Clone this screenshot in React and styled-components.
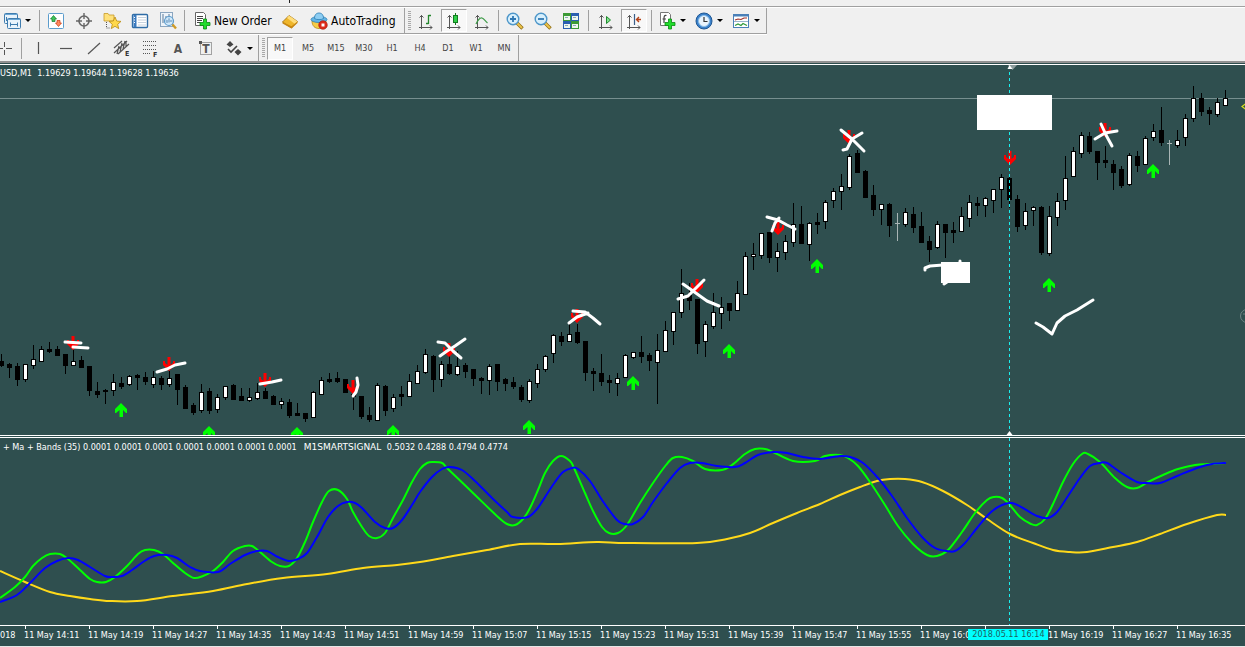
import React from "react";
import styled, { createGlobalStyle, css } from "styled-components";

const GlobalStyle = createGlobalStyle`
  html, body {
    margin: 0;
    background: #f0f0f0;
  }
  body {
    font-family: "DejaVu Sans Condensed", "DejaVu Sans", sans-serif;
    font-size: 9px;
    overflow-x: hidden;
  }
`;

const Page = styled.main`
  display: flex;
  flex-direction: column;
  background: #f0f0f0;
`;

const MenuStrip = styled.div`
  display: flex;
  height: 6px;
  border-bottom: 1px solid #a0a0a0;
  box-shadow: 0 1px 0 #fff;
`;

const MenuMark = styled.span`
  width: 1px;
  height: 3px;
  margin-left: 289px;
  background: #222;
`;

const ToolRow = styled.div`
  display: flex;
  align-items: stretch;
  height: 26px;
  padding-top: 1px;
`;

const Toolbar = styled.div`
  display: flex;
  align-items: center;
  border-right: 1px solid #a0a0a0;
  ${({ $line }) =>
    $line &&
    css`
      border-bottom: 1px solid #a0a0a0;
      box-shadow: 0 1px 0 #fff;
    `}
`;

const Grip = styled.span`
  width: 3px;
  height: 20px;
  margin: 0 1px 0 3px;
  background: repeating-linear-gradient(#a8a8a8 0 1px, #f0f0f0 1px 2px);
`;

const Sep = styled.span`
  width: 1px;
  height: 21px;
  margin: 0 ${({ $gap }) => $gap || 2}px;
  background: #a0a0a0;
`;

const Button = styled.button`
  display: flex;
  align-items: center;
  justify-content: ${({ $start }) => ($start ? "flex-start" : "center")};
  gap: 3px;
  box-sizing: border-box;
  flex: none;
  width: ${({ $w }) => $w || 28}px;
  height: 23px;
  padding: ${({ $start }) => ($start ? "0 0 0 5px" : "0")};
  border: 1px solid transparent;
  background: none;
  color: #444;
  font: inherit;
  white-space: nowrap;
  ${({ $pressed }) =>
    $pressed &&
    css`
      width: 26px;
      margin: 0 1px;
      border-color: #a0a0a0 #fff #fff #a0a0a0;
      background: #f8f8f8;
    `}
`;

const TextButton = styled(Button)`
  color: #000;
  font-size: 12px;
  line-height: 16px;
`;

const DropButton = styled.button`
  display: flex;
  align-items: center;
  width: ${({ $w }) => $w || 13}px;
  height: 23px;
  padding: 0;
  border: 0;
  background: none;

  &::before {
    content: "";
    margin-left: 1px;
    border: 3px solid transparent;
    border-top-color: #000;
    border-bottom-width: 0;
  }
`;

const Glyph = styled.svg`
  flex: none;
  display: block;
  overflow: visible;
`;

const Workspace = styled.section`
  display: flex;
  flex-direction: column;
  border-top: 2px solid #909090;
  background: #2f4f4f;
  color: #fff;
`;

const Pane = styled.div`
  position: relative;
  overflow: hidden;
  margin-top: 1px;
  border-top: 1px solid #fff;
  border-bottom: ${({ $split }) => ($split ? "1px solid #fff" : "0")};
`;

const PaneLabel = styled.div`
  position: absolute;
  top: ${({ $top }) => $top}px;
  left: ${({ $left }) => $left}px;
  line-height: 12px;
  white-space: pre;
`;

const SignalName = styled.span`
  margin: 0 3px 0 2px;
  font-family: "DejaVu Sans", sans-serif;
`;

const Plot = styled.svg`
  display: block;
  width: 100%;
  height: auto;
`;

const TimeAxis = styled.div`
  position: relative;
  display: grid;
  grid-template-columns: 24fr repeat(19, 64fr) 5fr;
  height: 20px;
  overflow: hidden;
  border-top: 1px solid #fff;
  border-bottom: 1px solid #e6e6e6;
`;

const AxisCell = styled.time`
  display: flex;
  flex-direction: column;
  min-width: 0;
  line-height: 12px;
  white-space: nowrap;

  &::before {
    content: "";
    width: 1px;
    height: 3px;
    margin-left: 1px;
    background: ${({ $plain }) => ($plain ? "transparent" : "#fff")};
  }
`;

const Cursor = styled.time`
  position: absolute;
  top: 3px;
  left: 81%;
  width: 80px;
  transform: translateX(-50%);
  background: #00ffff;
  color: #1f5f5f;
  line-height: 11px;
  text-align: center;
  white-space: nowrap;
`;

const Icon = ({ w = 18, children }) => (
  <Glyph width={w} height='18' viewBox={`0 0 ${w} 18`} fill='none' aria-hidden='true'>
    {children}
  </Glyph>
);

const WindowsIcon = () => (
  <Icon>
    <rect x='1.5' y='1.5' width='13' height='10' rx='1' fill='#e8f3fb' stroke='#3f7cae' />
    <path d='M2 2.500h12' stroke='#6aa6d4' />
    <rect x='4.5' y='6.5' width='13' height='10' rx='1' fill='#e8f3fb' stroke='#3f7cae' />
    <path d='M5 7.500h12' stroke='#6aa6d4' />
    <path d='M3.500 5v4M7 12.500h8M7.500 10.500v4M14.500 10.500v4' stroke='#3f7cae' />
  </Icon>
);

const MarketIcon = () => (
  <Icon>
    <rect x='1.500' y='1.500' width='15' height='15' rx='1' fill='#fff' stroke='#5b9ccc' />
    <path d='M6.500 3.500L9.500 7H8v2.500H5V7H3.500z' fill='#3fc45a' stroke='#147a2c' strokeWidth='.700' />
    <path d='M11.500 14.500l3-3.500H13V8.500h-3V11H8.500z' fill='#ff8a60' stroke='#c8380d' strokeWidth='.700' />
  </Icon>
);

const TargetIcon = () => (
  <Icon>
    <circle cx='9' cy='9' r='5' stroke='#666' strokeWidth='1.600' />
    <path d='M9 1v6M9 11v6M1 9h6M11 9h6' stroke='#666' strokeWidth='1.400' />
  </Icon>
);

const Star = ({ x = 0, y = 0 }) => (
  <path
    transform={`translate(${x} ${y})`}
    d='M6 0l1.700 4 4.300.400-3.300 2.900 1 4.300L6 9.300l-3.700 2.300 1-4.300L0 4.400 4.300 4z'
    fill='#ffd84a'
    stroke='#b98a10'
    strokeWidth='.800'
  />
);

const NavigatorIcon = () => (
  <Icon>
    <path d='M1 1.500h4l1 1.500h5v6H1z' fill='#ffe17a' stroke='#c79a28' strokeWidth='.800' />
    <path d='M3.500 10v6h4' stroke='#555' strokeDasharray='1 1' />
    <Star x={6} y={5} />
  </Icon>
);

const TerminalIcon = () => (
  <Icon>
    <rect x='1.500' y='2.500' width='15' height='13' rx='1' fill='#fff' stroke='#2f6ca6' strokeWidth='1.400' />
    <path d='M4 3v12' stroke='#3a7abf' strokeWidth='3' />
    <path d='M7 5.500h8M7 8h8M7 10.500h8M7 13h8' stroke='#b9c7d6' strokeWidth='.800' />
    <path d='M3 5.500h1M3 8h1M3 10.500h1' stroke='#fff' />
  </Icon>
);

const TesterIcon = () => (
  <Icon>
    <rect x='1.500' y='.500' width='12' height='14' fill='#eef4fa' stroke='#8ba6c0' />
    <path d='M4 2v9M7 4v6M10 2v5' stroke='#5a7a99' />
    <circle cx='10' cy='9' r='4.500' fill='#cbe6fa' fillOpacity='.85' stroke='#5d9ccc' strokeWidth='1.200' />
    <path d='M8 8v3M10 6.500v4M12 8v2' stroke='#5a8ab5' />
    <path d='M13.500 12.500l3.500 4' stroke='#cf9b27' strokeWidth='2.400' />
  </Icon>
);

const Plus = ({ x, y }) => (
  <path
    transform={`translate(${x} ${y})`}
    d='M3.500 0h3v3.500H10v3H6.500V10h-3V6.500H0v-3h3.500z'
    fill='#21dc2b'
    stroke='#078a10'
    strokeWidth='.800'
  />
);

const OrderIcon = () => (
  <Icon>
    <path d='M2.500.500h8l2 2v11h-10z' fill='#fff' stroke='#666' />
    <path d='M4 4.500h6M4 6.500h6M4 8.500h5M4 10.500h3' stroke='#444' />
    <Plus x={7} y={7} />
  </Icon>
);

const EditorIcon = () => (
  <Icon>
    <path d='M1.500 10L8 3.500l8.500 6-6 6.500z' fill='#efb62b' stroke='#9b6b0c' strokeWidth='.800' />
    <path d='M8 3.500l8.500 6-2.500 2.500-8-6z' fill='#ffdd7a' />
    <path d='M1.500 10l9 4.200L16.500 9.500V11l-6 5.500-9-5z' fill='#c98813' />
  </Icon>
);

const ExpertIcon = () => (
  <Icon>
    <path d='M2 9c0 5 3 7.500 7 7.500s7-2.500 7-7.500z' fill='#f6cc46' stroke='#b88a16' strokeWidth='.800' />
    <ellipse cx='9' cy='7.500' rx='8' ry='3' fill='#62b5e6' stroke='#2c7db2' strokeWidth='.800' />
    <path d='M4.500 6.500C4.500 2.500 6.500 1 9 1s4.500 1.500 4.500 5.500c-2 1.500-7 1.500-9 0z' fill='#8dcdf2' stroke='#2c7db2' strokeWidth='.800' />
    <circle cx='13' cy='13' r='4.300' fill='#dc2a1a' stroke='#a3140a' strokeWidth='.600' />
    <rect x='11.500' y='11.500' width='3' height='3' fill='#fff' />
  </Icon>
);

const Axes = () => (
  <path
    d='M4.500 3v14M2 15.500h13M2.500 5.500l2-2 2 2M13 13.500l2 2-2 2'
    stroke='#555'
  />
);

const BarsIcon = () => (
  <Icon>
    <Axes />
    <path d='M11.500 3v9M11.500 3.500H14M9 11.500h2.500' stroke='#23852c' strokeWidth='1.300' />
  </Icon>
);

const CandlesIcon = () => (
  <Icon>
    <Axes />
    <path d='M10.500 1v12' stroke='#157a20' />
    <rect x='8.500' y='3.500' width='4' height='7' fill='#2fd048' stroke='#157a20' />
  </Icon>
);

const LineIcon = () => (
  <Icon>
    <Axes />
    <path d='M3 12c2-4 4-6.500 6-6 2 .500 3 3 5.500 5' stroke='#3c9a46' strokeWidth='1.200' />
  </Icon>
);

const ZoomIcon = ({ plus }) => (
  <Icon>
    <path d='M11 11l5.500 5.500' stroke='#8f6c14' strokeWidth='3.400' />
    <path d='M11 11l5 5' stroke='#ecc54a' strokeWidth='2' />
    <circle cx='7' cy='7' r='5.800' fill='#d7effc' stroke='#4d96c9' strokeWidth='1.400' />
    <path d={plus ? "M4 7h6M7 4v6" : "M4 7h6"} stroke='#2f78b4' strokeWidth='1.800' />
  </Icon>
);

const TilesIcon = () => (
  <Icon>
    <rect x='1' y='1' width='8' height='8' fill='#3b9a35' />
    <rect x='9' y='1' width='8' height='8' fill='#2a5fb0' />
    <rect x='1' y='9' width='8' height='8' fill='#2a5fb0' />
    <rect x='9' y='9' width='8' height='8' fill='#3b9a35' />
    <path d='M2 4h6v4H2zM10 4h6v4h-6zM2 12h6v4H2zM10 12h6v4h-6z' fill='#eef7ee' />
    <path d='M3 5.500h3M11 5.500h3M3 13.500h3M11 13.500h3' stroke='#8aa8b8' />
  </Icon>
);

const ScrollIcon = () => (
  <Icon>
    <Axes />
    <path d='M9.500 4.500l4 3.500-4 3.500z' fill='#7fe08a' stroke='#1e8a2c' />
  </Icon>
);

const ShiftIcon = () => (
  <Icon>
    <Axes />
    <path d='M9.500 2v11' stroke='#3a5f8a' strokeWidth='1.200' />
    <path d='M16 7.500h-4M14 5L11.500 7.500 14 10' stroke='#b5431a' strokeWidth='1.400' />
  </Icon>
);

const IndicatorIcon = () => (
  <Icon>
    <path d='M2.500.500h8l2 2v11h-10z' fill='#fff' stroke='#777' />
    <path d='M8.500 3.500C6 3 6 5 6 7v4M4.500 7H8' stroke='#444' strokeWidth='1.200' />
    <Plus x={7} y={7} />
  </Icon>
);

const ClockIcon = () => (
  <Icon>
    <circle cx='9' cy='9' r='8' fill='#3b82cc' stroke='#1f5793' />
    <circle cx='9' cy='9' r='5.500' fill='#e9f4fd' stroke='#8fc0e8' />
    <path d='M9 5v4.500h3.500' stroke='#333' strokeWidth='1.200' />
  </Icon>
);

const TemplateIcon = () => (
  <Icon>
    <rect x='1.500' y='2.500' width='15' height='13' fill='#fff' stroke='#4a80b8' />
    <path d='M2 3.500h14' stroke='#4a80b8' strokeWidth='2' />
    <path d='M3 8l3-1 3 .500 3-1.500h3' stroke='#a03028' strokeWidth='1.200' />
    <path d='M2 9.500h14' stroke='#9ab4cc' />
    <path d='M3 13.500l3-1.500 3 1.500 2-2 4 2' stroke='#2f9a3a' strokeWidth='1.200' />
  </Icon>
);

const CrossIcon = () => (
  <Icon w={19}>
    <path d='M4.500 3v5M4.500 11v5M-1 9.500h4M6 9.500h6' stroke='#555' />
  </Icon>
);

const StrokeIcon = ({ d }) => (
  <Icon>
    <path d={d} stroke='#555' strokeWidth='1.200' />
  </Icon>
);

const ChannelIcon = () => (
  <Icon>
    <path d='M1 14L14 2M1 9l8-7M5 15L16 5M4 15l2-8M7 13l2-9M10 10l2-8M13 8V2' stroke='#555' strokeWidth='1.200' />
    <text x='12' y='17' fontSize='7' fontWeight='bold' fill='#333'>E</text>
  </Icon>
);

const FiboIcon = () => (
  <Icon>
    <path d='M2 2.500h14M2 6.500h14M2 10.500h14M2 14.500h8' stroke='#555' strokeDasharray='1 1' />
    <text x='12' y='18' fontSize='7' fontWeight='bold' fill='#333'>F</text>
  </Icon>
);

const LetterIcon = ({ boxed, children }) => (
  <Icon>
    {boxed && <rect x='3.500' y='3.500' width='11' height='12' stroke='#555' strokeDasharray='1 1' />}
    {boxed && <path d='M2 2h3v3H2z' fill='#555' />}
    <text x='9' y='14' textAnchor='middle' fontSize='12' fontWeight='bold' fill='#555'>
      {children}
    </text>
  </Icon>
);

const ShapesIcon = () => (
  <Icon>
    <path d='M6 2l3.500 3.500L6 8 2.500 5.500zM14 10l3.500 3L14 16.500 10.500 13z' fill='#444' />
    <path d='M4 10l3 3 6-6' stroke='#444' strokeWidth='1.600' />
  </Icon>
);

const frames = ["M1", "M5", "M15", "M30", "H1", "H4", "D1", "W1", "MN"];

const times = [
  "14:11", "14:19", "14:27", "14:35", "14:43", "14:51", "14:59",
  "15:07", "15:15", "15:23", "15:31", "15:39", "15:47", "15:55",
  "16:06", "", "16:19", "16:27", "16:35"
].map(t => (t ? `11 May ${t}` : ""));

// high, body top, body bottom, low, up (1), down (0) or flat (2)
const candles = [
  [354, 361, 365, 366, 0], [363, 364, 367, 377, 0], [363, 366, 379, 385, 0], [364, 364, 379, 381, 1],
  [345, 359, 365, 368, 1], [346, 349, 361, 361, 1], [342, 349, 351, 352, 0], [346, 349, 355, 355, 0],
  [354, 354, 365, 373, 0], [350, 361, 365, 365, 1], [356, 360, 367, 367, 0], [366, 366, 390, 395, 0],
  [382, 391, 394, 397, 0], [389, 390, 391, 403, 0], [374, 382, 390, 395, 1], [377, 383, 386, 388, 0],
  [375, 376, 384, 385, 1], [374, 375, 377, 389, 0], [372, 377, 381, 384, 0], [371, 377, 384, 387, 1],
  [376, 378, 384, 389, 0], [371, 378, 384, 386, 1], [374, 374, 389, 404, 0], [385, 387, 408, 408, 0],
  [403, 405, 412, 414, 0], [384, 392, 410, 412, 1], [388, 391, 410, 413, 0], [394, 397, 409, 412, 1],
  [386, 386, 397, 399, 1], [384, 385, 399, 399, 0], [388, 396, 400, 400, 0], [388, 397, 400, 401, 1],
  [383, 392, 398, 399, 1], [388, 391, 398, 398, 0], [395, 396, 404, 404, 0], [398, 401, 404, 408, 1],
  [399, 402, 415, 417, 0], [403, 413, 415, 415, 0], [413, 413, 418, 421, 0], [391, 392, 417, 417, 1],
  [377, 380, 394, 394, 1], [373, 379, 381, 382, 0], [372, 378, 381, 382, 0], [379, 379, 392, 392, 0],
  [390, 394, 396, 409, 0], [396, 396, 416, 418, 0], [407, 415, 419, 421, 0], [383, 385, 420, 420, 1],
  [385, 386, 410, 415, 0], [394, 397, 408, 411, 1], [386, 394, 396, 405, 0], [374, 381, 396, 396, 1],
  [365, 371, 383, 383, 1], [349, 354, 372, 373, 1], [355, 356, 379, 391, 0], [361, 364, 379, 386, 1],
  [355, 364, 373, 374, 0], [351, 366, 374, 375, 1], [363, 365, 371, 377, 0], [369, 369, 378, 385, 0],
  [377, 378, 380, 393, 0], [364, 366, 380, 394, 1], [364, 364, 381, 390, 0], [378, 379, 383, 390, 0],
  [377, 382, 386, 388, 0], [385, 387, 399, 401, 0], [379, 381, 400, 402, 1], [364, 369, 383, 387, 1],
  [355, 356, 369, 371, 1], [334, 335, 353, 362, 1], [332, 336, 341, 345, 0], [323, 334, 341, 341, 1],
  [324, 332, 342, 343, 0], [341, 341, 372, 380, 0], [368, 371, 373, 390, 0], [354, 373, 381, 385, 0],
  [375, 380, 382, 392, 0], [373, 378, 383, 395, 1], [354, 355, 377, 377, 1], [352, 352, 357, 358, 1],
  [336, 352, 356, 362, 0], [353, 355, 360, 370, 0], [334, 350, 362, 403, 1], [321, 330, 351, 351, 1],
  [312, 312, 331, 344, 1], [269, 293, 312, 317, 1], [283, 295, 300, 309, 0], [299, 299, 343, 353, 0],
  [321, 324, 341, 356, 1], [293, 312, 326, 328, 1], [297, 307, 313, 328, 1], [303, 303, 310, 320, 0],
  [281, 293, 310, 310, 1], [252, 256, 294, 294, 1], [243, 254, 256, 269, 1], [233, 233, 255, 258, 1],
  [232, 232, 257, 262, 0], [243, 251, 257, 271, 1], [235, 241, 252, 259, 1], [203, 224, 242, 246, 1],
  [206, 224, 243, 243, 0], [222, 223, 244, 260, 1], [213, 222, 224, 233, 0], [200, 202, 221, 228, 1],
  [188, 191, 200, 207, 1], [174, 186, 191, 209, 1], [154, 156, 187, 189, 1], [150, 153, 172, 172, 0],
  [170, 171, 197, 197, 0], [185, 195, 209, 215, 0], [204, 204, 209, 224, 1], [203, 204, 225, 236, 0],
  [213, 223, 223, 241, 2], [208, 212, 224, 226, 1], [207, 214, 227, 232, 0], [212, 226, 242, 242, 0],
  [236, 241, 249, 261, 0], [221, 224, 247, 248, 1], [224, 224, 232, 257, 0], [222, 230, 232, 242, 0],
  [207, 216, 231, 231, 1], [195, 202, 218, 226, 1], [197, 203, 205, 215, 0], [197, 198, 205, 216, 1],
  [189, 189, 200, 212, 1], [174, 177, 189, 207, 1], [175, 178, 199, 207, 0], [195, 199, 226, 231, 0],
  [203, 211, 225, 229, 1], [206, 207, 210, 225, 1], [206, 207, 252, 254, 0], [206, 216, 253, 255, 1],
  [193, 201, 217, 225, 1], [156, 178, 200, 209, 1], [147, 151, 176, 176, 1], [132, 135, 153, 157, 1],
  [132, 136, 151, 153, 0], [151, 151, 162, 179, 0], [146, 160, 162, 167, 0], [160, 164, 172, 189, 0],
  [166, 169, 185, 187, 0], [153, 155, 184, 185, 1], [151, 156, 165, 171, 0], [136, 138, 164, 164, 1],
  [124, 131, 137, 140, 1], [107, 130, 142, 145, 0], [140, 143, 143, 165, 2], [130, 140, 145, 147, 1],
  [114, 118, 137, 145, 1], [86, 98, 118, 121, 1], [93, 98, 111, 115, 0], [107, 110, 113, 124, 0],
  [98, 102, 114, 116, 1], [90, 98, 105, 105, 1]
];

const Candle = ({ x, data: [high, top, bottom, low, kind] }) => {
  if (kind === 2) {
    return <path d={`M${x + 0.5} ${high}V${low}M${x - 2} ${top + 0.5}h5`} stroke='#a9b5b5' />;
  }
  return (
    <g>
      <rect x={x} y={high} width='1' height={low - high + 1} fill='#000' />
      <rect x={x - 2} y={top} width='5' height={bottom - top + 1} fill='#000' />
      {kind === 1 && (
        <rect x={x - 1} y={top + 1} width='3' height={Math.max(bottom - top - 1, 1)} fill='#fff' />
      )}
    </g>
  );
};

const buys = [
  [121, 403], [209, 426], [297, 427], [393, 425], [529, 420],
  [633, 376], [729, 344], [817, 259], [1049, 278], [1153, 164]
];

const sells = [
  [73, 336], [169, 357], [265, 373], [353, 380], [449, 343], [577, 309],
  [697, 279], [778, 221], [849, 130], [1010, 151], [1105, 123]
];

const marks = [
  "M65 342L81 343M73 347L88 348",
  "M157 372L167 369L175 365L185 363",
  "M260 384L272 382L281 380",
  "M357 378L358 385L356 392L353 396",
  "M438 342L445 343L453 351L461 358M465 339L455 346L447 351L440 356",
  "M569 323L577 317L588 313M573 311L585 312L593 318L600 324",
  "M683 284L693 291L707 301L719 306M704 280L697 287L688 296L678 299",
  "M767 217L778 220L787 225L795 229M779 218L775 223L772 231",
  "M841 130L852 139L864 151M862 133L852 139L847 149L843 150",
  "M1101 124L1106 135L1112 146M1095 139L1105 133L1117 131",
  "M1036 323L1043 327L1052 334L1057 323L1065 316L1077 310L1093 300",
  "M925 270L925 268L930 266L943 265M960 261V264M944 284L947 282"
];

const ma =
  "0,571 25,582 50,592 70,596 90,599 110,601 137,601 173,596 213,591 247,584 283,578 327,574 363,568 397,565 420,562 453,556 487,550 520,544 557,544 597,542 627,543 697,543 727,539 750,533 773,523 797,513 820,504 840,495 860,487 877,481 890,479 905,479 922,482 943,491 967,505 987,519 1010,534 1033,543 1053,550 1070,552 1087,552 1113,547 1137,542 1160,534 1187,524 1217,515 1226,515";

const fast =
  "0,598 15,587 25,577 33,566 42,558 50,554 60,554 68,559 80,570 90,579 97,582 106,582 115,577 127,566 138,554 145,550 154,550 163,554 173,563 185,573 194,578 203,576 213,571 223,562 233,551 245,546 252,546 260,552 272,562 280,566 289,566 297,558 305,542 313,522 322,502 329,491 338,490 347,499 353,512 362,527 369,536 377,538 385,533 393,518 403,500 412,482 420,469 427,463 433,462 442,463 448,469 473,493 498,517 507,524 515,525 523,519 530,508 538,490 545,473 553,461 561,456 570,461 574,468 585,493 593,511 602,527 609,533 618,533 627,525 640,503 653,483 666,465 673,458 682,457 693,461 705,469 722,470 732,465 745,454 755,449 765,449 773,452 793,461 815,461 825,456 840,455 848,458 858,466 870,482 885,505 898,526 913,544 927,555 937,556 948,550 962,532 975,513 987,500 994,497 1002,498 1009,504 1020,517 1031,524 1037,525 1045,519 1053,504 1063,482 1073,464 1082,454 1088,454 1100,462 1115,478 1127,487 1137,488 1148,482 1163,475 1178,469 1195,465 1210,464 1226,463";

const slow =
  "0,602 17,595 30,583 45,568 57,561 68,558 78,560 90,567 105,576 113,577 122,576 132,570 143,562 154,556 167,555 177,558 190,567 200,571 218,572 230,564 245,555 257,551 267,551 278,557 289,561 298,559 307,553 317,537 328,517 338,506 347,502 355,503 362,508 375,522 385,528 393,528 402,520 412,505 420,492 432,477 442,469 450,467 462,470 475,481 492,498 507,512 513,517 528,517 537,509 547,494 555,482 563,472 572,468 578,469 590,481 602,500 617,520 625,524 633,524 643,517 653,502 667,483 680,468 690,463 702,463 717,466 735,467 745,463 758,455 773,452 787,453 803,457 820,459 840,456 850,457 863,463 878,478 892,496 907,518 922,537 935,548 947,551 955,551 965,543 977,528 990,513 1002,505 1012,503 1023,508 1037,516 1048,518 1057,512 1068,496 1080,478 1090,466 1100,463 1107,463 1120,472 1137,482 1147,483 1160,483 1177,476 1197,468 1212,464 1226,463";

// Catmull-Rom through the sampled points
const smooth = samples => {
  const pts = samples.split(" ").map(p => p.split(",").map(Number));
  return pts.slice(1).reduce((d, p2, i) => {
    const p1 = pts[i];
    const p0 = pts[i - 1] || p1;
    const p3 = pts[i + 2] || p2;
    const c1 = [0, 1].map(k => p1[k] + (p2[k] - p0[k]) / 6);
    const c2 = [0, 1].map(k => p2[k] - (p3[k] - p1[k]) / 6);
    return `${d}C${c1} ${c2} ${p2}`;
  }, `M${pts[0]}`);
};

const PricePlot = () => (
  <Plot viewBox='0 65 1245 370'>
    <path d='M0 98.5H1245' stroke='#778f8f' />
    {candles.map((data, i) => (
      <Candle key={i} x={1 + i * 8} data={data} />
    ))}
    {sells.map(([x, y]) => (
      <path
        key={x}
        transform={`translate(${x} ${y})`}
        d='M-1.5 0h3v8L4 6V4l2 0v4L0 14l-6-6V4l2 0v2l2.500 2z'
        fill='#ff0000'
      />
    ))}
    {buys.map(([x, y]) => (
      <path
        key={x}
        transform={`translate(${x} ${y})`}
        d='M0 0l6 6v4H5L2 7v7h-3.500V7L-5 10h-1V6z'
        fill='#00ff00'
      />
    ))}
    <path d='M1009.5 66V435' stroke='#19f0f0' strokeDasharray='3 3' />
    <path d='M1008 65h9l-4.500 5z' fill='#8c9c9c' />
    <path d='M1009.500 65l3 4h-5zM1009.500 431l3 4h-6z' fill='#fff' />
    <rect x='977' y='95' width='75' height='35' fill='#fff' />
    <rect x='941' y='262' width='29' height='21' fill='#fff' />
    {marks.map(d => (
      <path key={d} d={d} fill='none' stroke='#fff' strokeWidth='3' strokeLinecap='round' strokeLinejoin='round' />
    ))}
    <path d='M1246 103.500l-4 3 4 3' fill='none' stroke='#d8e020' strokeWidth='1.200' />
    <circle cx='1247' cy='316' r='6.500' fill='none' stroke='#708585' />
    <path d='M1243 314h3' stroke='#708585' />
  </Plot>
);

const SignalPlot = () => (
  <Plot viewBox='0 438 1245 187'>
    <g fill='none' strokeWidth='2' strokeLinejoin='round'>
      <path d={smooth(ma)} stroke='#ffd91a' />
      <path d={smooth(fast)} stroke='#00ff00' />
      <path d={smooth(slow)} stroke='#0000ff' />
    </g>
    <path d='M1009.5 438V625' stroke='#19f0f0' strokeDasharray='3 3' />
  </Plot>
);

const StandardBar = () => (
  <ToolRow>
    <Toolbar $line>
      <Button $w={24} aria-label='Windows'><WindowsIcon /></Button>
      <DropButton aria-label='Window list' />
      <Sep />
      <Button aria-label='Market Watch'><MarketIcon /></Button>
      <Button aria-label='Data Window'><TargetIcon /></Button>
      <Button aria-label='Navigator'><NavigatorIcon /></Button>
      <Button aria-label='Terminal'><TerminalIcon /></Button>
      <Button aria-label='Strategy Tester'><TesterIcon /></Button>
      <Sep />
      <TextButton $w={89} $start><OrderIcon />New Order</TextButton>
      <Button aria-label='MetaEditor'><EditorIcon /></Button>
      <TextButton $w={100} $start><ExpertIcon />AutoTrading</TextButton>
    </Toolbar>
    <Toolbar $line>
      <Grip />
      <Button aria-label='Bar chart'><BarsIcon /></Button>
      <Button $pressed aria-label='Candlesticks' aria-pressed='true'><CandlesIcon /></Button>
      <Button aria-label='Line chart'><LineIcon /></Button>
      <Sep />
      <Button aria-label='Zoom in'><ZoomIcon plus /></Button>
      <Button aria-label='Zoom out'><ZoomIcon /></Button>
      <Button aria-label='Tile windows'><TilesIcon /></Button>
      <Sep $gap={3} />
      <Button aria-label='Auto scroll'><ScrollIcon /></Button>
      <Button $pressed aria-label='Chart shift' aria-pressed='true'><ShiftIcon /></Button>
      <Sep $gap={3} />
      <Button $w={24} aria-label='Indicators'><IndicatorIcon /></Button>
      <DropButton aria-label='Indicator list' />
      <Button $w={24} aria-label='Periods'><ClockIcon /></Button>
      <DropButton aria-label='Period list' />
      <Button $w={24} aria-label='Templates'><TemplateIcon /></Button>
      <DropButton aria-label='Template list' />
    </Toolbar>
  </ToolRow>
);

const StudiesBar = () => (
  <ToolRow>
    <Toolbar>
      <Button $w={19} aria-label='Crosshair'><CrossIcon /></Button>
      <Sep />
      <Button aria-label='Vertical line'><StrokeIcon d='M9.500 3v12' /></Button>
      <Button aria-label='Horizontal line'><StrokeIcon d='M3 9.500h12' /></Button>
      <Button aria-label='Trendline'><StrokeIcon d='M3 15L15 4' /></Button>
      <Button aria-label='Channel'><ChannelIcon /></Button>
      <Button aria-label='Fibonacci'><FiboIcon /></Button>
      <Button aria-label='Text'><LetterIcon>A</LetterIcon></Button>
      <Button aria-label='Text label'><LetterIcon boxed>T</LetterIcon></Button>
      <Button $w={26} aria-label='Arrows'><ShapesIcon /></Button>
      <DropButton $w={12} aria-label='Arrow list' />
    </Toolbar>
    <Toolbar>
      <Grip />
      {frames.map(f => (
        <Button key={f} $pressed={f === "M1"}>{f}</Button>
      ))}
    </Toolbar>
  </ToolRow>
);

export default function App() {
  return (
    <Page>
      <GlobalStyle />
      <MenuStrip>
        <MenuMark />
      </MenuStrip>
      <StandardBar />
      <StudiesBar />
      <Workspace>
        <Pane $split>
          <PricePlot />
          <PaneLabel $top={2} $left={0}>{"USD,M1  1.19629 1.19644 1.19628 1.19636"}</PaneLabel>
        </Pane>
        <Pane>
          <SignalPlot />
          <PaneLabel $top={3} $left={3}>
            {"+ Ma + Bands (35) 0.0001 0.0001 0.0001 0.0001 0.0001 0.0001 0.0001  "}
            <SignalName>M1SMARTSIGNAL</SignalName>
            {" 0.5032 0.4288 0.4794 0.4774"}
          </PaneLabel>
        </Pane>
        <TimeAxis>
          <AxisCell $plain>018</AxisCell>
          {times.map((t, i) => (
            <AxisCell key={i}>{t}</AxisCell>
          ))}
          <Cursor>2018.05.11 16:14</Cursor>
        </TimeAxis>
      </Workspace>
    </Page>
  );
}
